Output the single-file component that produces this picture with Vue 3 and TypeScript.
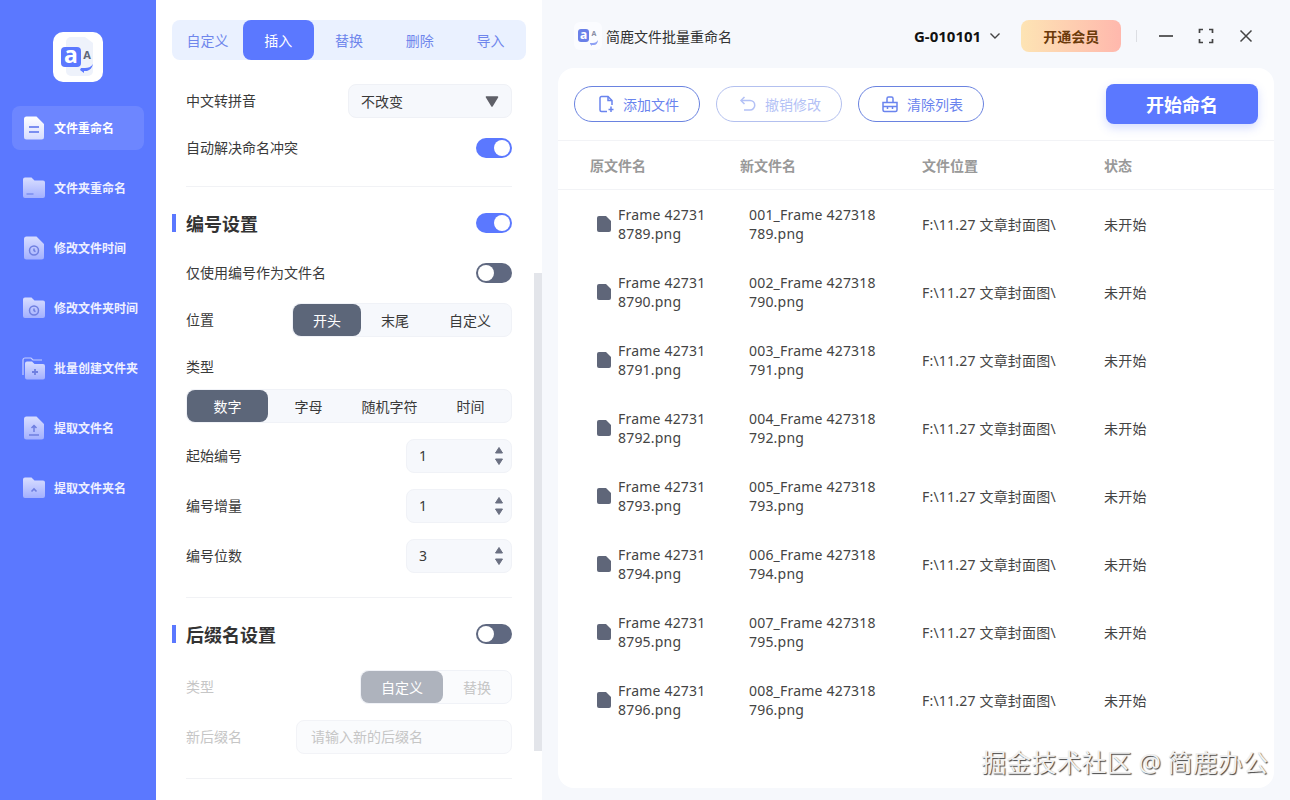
<script setup lang="ts">
const navItems = [
  { label: '文件重命名', shape: 'file', mark: 'lines' },
  { label: '文件夹重命名', shape: 'folder', mark: 'dash' },
  { label: '修改文件时间', shape: 'file', mark: 'clock' },
  { label: '修改文件夹时间', shape: 'folder', mark: 'clock' },
  { label: '批量创建文件夹', shape: 'stack', mark: 'plus' },
  { label: '提取文件名', shape: 'file', mark: 'upload' },
  { label: '提取文件夹名', shape: 'folder', mark: 'caret' },
]
const tabs = ['自定义', '插入', '替换', '删除', '导入']
const numberInputs = [
  { label: '起始编号', value: 1 },
  { label: '编号增量', value: 1 },
  { label: '编号位数', value: 3 },
]
const files = [789, 790, 791, 792, 793, 794, 795, 796].map((n, i) => ({
  oldName: `Frame 427318${n}.png`,
  newName: `00${i + 1}_Frame 427318${n}.png`,
}))
</script>

<template>
  <div class="app">
    <aside class="sidebar">
      <div class="logo">
        <svg width="50" height="50" viewBox="0 0 50 50">
          <path d="M13 10a5 5 0 0 1 5-5h14l8 6v28a5 5 0 0 1-5 5H18a5 5 0 0 1-5-5z" fill="#eef2fb" />
          <rect x="8" y="15" width="20" height="20" rx="4" fill="#5b78ff" />
          <text x="18" y="31" class="logo-a">a</text>
          <text x="34" y="27" class="logo-b">A</text>
          <path d="M28 36h4c3 0 6-1 8-4-1 4-3 6-6 7h-3v2l-4-3 1-2z" fill="#5b78ff" />
        </svg>
      </div>
      <nav class="nav">
        <div v-for="(item, i) in navItems" :key="item.label" class="nav-item" :class="{ active: i === 0 }">
          <svg width="24" height="24" viewBox="0 0 24 24">
            <defs>
              <linearGradient :id="`nav${i}`" x1="0" y1="0" x2="0" y2="1">
                <stop offset="0" :stop-color="i === 0 ? '#ffffff' : '#d9deff'" />
                <stop offset="1" :stop-color="i === 0 ? '#d6dcff' : '#a3b0ff'" />
              </linearGradient>
            </defs>
            <path v-if="item.shape === 'file'" d="M5 .5h9.5L22 8v13a2.5 2.5 0 0 1-2.5 2.5h-15A2.5 2.5 0 0 1 2 21V3A2.5 2.5 0 0 1 4.500 .5z" :fill="`url(#nav${i})`" />
            <path v-if="item.shape === 'folder'" d="M1 3.500A2 2 0 0 1 3 1.500h6.500l3 3h8.500a2 2 0 0 1 2 2V20a2 2 0 0 1-2 2H3a2 2 0 0 1-2-2z" :fill="`url(#nav${i})`" />
            <template v-if="item.shape === 'stack'">
              <path d="M1 19V4a2 2 0 0 1 2-2h6l2 2h9" fill="none" stroke="#c5cdff" stroke-width="1.200" />
              <path d="M3 7.500a2 2 0 0 1 2-2h5l2.500 2.500H21a2 2 0 0 1 2 2V21.500a2 2 0 0 1-2 2H5a2 2 0 0 1-2-2z" :fill="`url(#nav${i})`" />
            </template>
            <g v-if="item.mark === 'lines'" fill="none" stroke="#7b8ef0" stroke-width="1.800">
              <path d="M7 11h10M7 16h10" />
            </g>
            <path v-if="item.mark === 'dash'" d="M4.500 18h7" stroke="#7b8ef0" stroke-width="1.500" fill="none" />
            <g v-if="item.mark === 'clock'" fill="none" stroke="#6f7fe0" stroke-width="1.500">
              <circle cx="12" cy="14.500" r="4.500" />
              <path d="M12 12.500v2.200l1.500 1" />
            </g>
            <path v-if="item.mark === 'plus'" d="M13 13v6M10 16h6" stroke="#6f7fe0" stroke-width="1.800" fill="none" />
            <path v-if="item.mark === 'upload'" d="M12 16v-6M9.500 12 12 9.500l2.500 2.500M7 19h10" stroke="#6f7fe0" stroke-width="1.500" fill="none" />
            <path v-if="item.mark === 'caret'" d="M9.500 15.500 12 13l2.500 2.500" stroke="#6f7fe0" stroke-width="1.600" fill="none" />
          </svg>
          <span>{{ item.label }}</span>
        </div>
      </nav>
    </aside>

    <section class="panel">
      <div class="tabs">
        <div v-for="(tab, i) in tabs" :key="tab" class="tab" :class="{ active: i === 1 }">{{ tab }}</div>
      </div>

      <div class="form">
        <div class="row mt-24">
          <span>中文转拼音</span>
          <div class="select">
            <span>不改变</span>
            <svg width="14" height="11" viewBox="0 0 14 11"><path d="M1.500 1h11L7 10z" fill="#5f6068" stroke="#5f6068" stroke-width="1.500" stroke-linejoin="round" /></svg>
          </div>
        </div>
        <div class="row mt-20">
          <span>自动解决命名冲突</span>
          <div class="switch on"><i></i></div>
        </div>
        <div class="divider mt-28"></div>

        <div class="row heading mt-26">
          <h2>编号设置</h2>
          <div class="switch on"><i></i></div>
        </div>
        <div class="row mt-30">
          <span>仅使用编号作为文件名</span>
          <div class="switch"><i></i></div>
        </div>
        <div class="row mt-20">
          <span>位置</span>
          <div class="seg seg-position">
            <div class="seg-item active">开头</div>
            <div class="seg-item">末尾</div>
            <div class="seg-item">自定义</div>
          </div>
        </div>
        <div class="row mt-20"><span>类型</span></div>
        <div class="seg seg-type mt-12">
          <div class="seg-item active">数字</div>
          <div class="seg-item">字母</div>
          <div class="seg-item">随机字符</div>
          <div class="seg-item">时间</div>
        </div>
        <div v-for="input in numberInputs" :key="input.label" class="row mt-16">
          <span>{{ input.label }}</span>
          <div class="number">
            <span>{{ input.value }}</span>
            <div class="spin">
              <svg width="10" height="8" viewBox="0 0 10 8"><path d="M1.500 7 5 1.500 8.500 7z" fill="#6b7082" stroke="#6b7082" stroke-linejoin="round" /></svg>
              <svg width="10" height="8" viewBox="0 0 10 8"><path d="M1.500 1 5 6.500 8.500 1z" fill="#6b7082" stroke="#6b7082" stroke-linejoin="round" /></svg>
            </div>
          </div>
        </div>
        <div class="divider mt-24"></div>

        <div class="row heading mt-26">
          <h2>后缀名设置</h2>
          <div class="switch"><i></i></div>
        </div>
        <div class="row mt-26 muted">
          <span>类型</span>
          <div class="seg seg-suffix">
            <div class="seg-item active">自定义</div>
            <div class="seg-item">替换</div>
          </div>
        </div>
        <div class="row mt-16 muted">
          <span>新后缀名</span>
          <div class="text-input">请输入新的后缀名</div>
        </div>
        <div class="divider mt-24"></div>
      </div>
      <div class="scrollbar"></div>
    </section>

    <main class="main">
      <header class="titlebar">
        <div class="mini-logo">
          <svg width="24" height="24" viewBox="0 0 24 24">
            <rect x="2" y="5" width="11" height="13" rx="3" fill="#6a80e8" />
            <text x="7.500" y="15" class="mini-a">a</text>
            <text x="18" y="12" class="mini-b">A</text>
            <path d="M14 19h3c2 0 4-1 5-3 0 3-2 5-4 5h-2v1l-2-2z" fill="#8fa2f5" />
          </svg>
        </div>
        <span class="app-name">简鹿文件批量重命名</span>
        <span class="account">G-010101</span>
        <svg class="chevron" width="12" height="8" viewBox="0 0 12 8"><path d="M1.500 1.500 6 6l4.500-4.500" fill="none" stroke="#444" stroke-width="1.400" /></svg>
        <div class="vip">开通会员</div>
        <div class="separator"></div>
        <svg class="win" width="16" height="16" viewBox="0 0 16 16"><path d="M1 8h14" stroke="#444" stroke-width="1.700" /></svg>
        <svg class="win" width="16" height="16" viewBox="0 0 16 16"><path d="M1.500 5V1.500H5M11 1.500h3.500V5M14.500 11v3.500H11M5 14.500H1.500V11" fill="none" stroke="#444" stroke-width="1.700" /></svg>
        <svg class="win" width="16" height="16" viewBox="0 0 16 16"><path d="m2.500 2.500 11 11M13.500 2.500l-11 11" stroke="#444" stroke-width="1.500" /></svg>
      </header>

      <div class="card">
        <div class="toolbar">
          <button class="btn">
            <svg width="18" height="18" viewBox="0 0 18 18" fill="none" stroke="#6a84ee" stroke-width="1.500">
              <path d="M10 16.500H4.500A1.500 1.500 0 0 1 3 15V3a1.500 1.500 0 0 1 1.500-1.500h6.500L15 5.500V10" />
              <path d="M11 1.500v4h4M14 11.500v5.500M11.500 14.500h5" />
            </svg>
            添加文件
          </button>
          <button class="btn disabled">
            <svg width="18" height="18" viewBox="0 0 18 18" fill="none" stroke="#6a84ee" stroke-width="1.500">
              <path d="M5.500 2 2 5.500 5.500 9" />
              <path d="M2.500 5.500H11a4.500 4.500 0 0 1 0 9.500H5" />
            </svg>
            撤销修改
          </button>
          <button class="btn">
            <svg width="18" height="18" viewBox="0 0 18 18" fill="none" stroke="#6a84ee" stroke-width="1.500">
              <path d="M2 7.500h14V15a1.500 1.500 0 0 1-1.500 1.500h-11A1.500 1.500 0 0 1 2 15zM1.500 7.500h15M6 7.500V3.500A1.500 1.500 0 0 1 7.500 2h3A1.500 1.500 0 0 1 12 3.500v4M2 11.500h14M6.500 11.500V14M11.500 11.500V14" />
            </svg>
            清除列表
          </button>
          <button class="start">开始命名</button>
        </div>

        <div class="table-head">
          <span>原文件名</span>
          <span>新文件名</span>
          <span>文件位置</span>
          <span>状态</span>
        </div>
        <div class="table-body">
          <div v-for="file in files" :key="file.newName" class="table-row">
            <div class="name-cell">
              <svg width="14" height="16" viewBox="0 0 14 16"><path d="M2 0h7l5 5v9a2 2 0 0 1-2 2H2a2 2 0 0 1-2-2V2a2 2 0 0 1 2-2z" fill="#5f6679" /></svg>
              <span class="old-name">{{ file.oldName }}</span>
            </div>
            <div class="new-name">{{ file.newName }}</div>
            <div>F:\11.27 文章封面图\</div>
            <div>未开始</div>
          </div>
        </div>
      </div>
    </main>

    <div class="watermark">掘金技术社区 @ 简鹿办公</div>
  </div>
</template>

<style>
body {
  background: #f6f8fc;
  overflow: hidden;
}
</style>

<style scoped>
.app {
  position: relative;
  display: flex;
  width: 1290px;
  height: 800px;
  overflow: hidden;
  font-family: "Noto Sans", "Noto Sans CJK SC", sans-serif;
  font-size: 14px;
  color: #3a3a3a;
}

.sidebar {
  flex: 0 0 156px;
  background: #5b78ff;
}

.logo {
  width: 50px;
  height: 50px;
  margin: 32px 0 0 53px;
  background: #fff;
  border-radius: 10px;
}

.logo-a {
  font: 700 23px "Noto Sans", sans-serif;
  fill: #fff;
  text-anchor: middle;
}

.logo-b {
  font: 700 11px "Noto Sans", sans-serif;
  fill: #5f6679;
  text-anchor: middle;
}

.nav {
  display: flex;
  flex-direction: column;
  gap: 16px;
  margin: 24px 12px 0;
}

.nav-item {
  display: flex;
  align-items: center;
  gap: 8px;
  height: 44px;
  padding-left: 10px;
  border-radius: 8px;
  font-size: 12px;
  font-weight: 700;
  color: #eef0ff;
  white-space: nowrap;
}

.nav-item.active {
  background: rgba(255, 255, 255, 0.11);
  color: #fff;
}

.panel {
  position: relative;
  flex: 0 0 386px;
  background: #fff;
  padding-top: 20px;
}

.tabs {
  display: flex;
  height: 40px;
  margin: 0 16px;
  background: #eaf1ff;
  border-radius: 8px;
}

.tab {
  flex: 1;
  display: flex;
  align-items: center;
  justify-content: center;
  color: #6f86ec;
  border-radius: 8px;
}

.tab.active {
  background: #5b78ff;
  color: #fff;
}

.form {
  padding: 0 30px;
}

.row {
  display: flex;
  align-items: center;
  justify-content: space-between;
  min-height: 20px;
}

.row > span {
  line-height: 19px;
  padding-bottom: 1px;
}

.number > span,
.text-input {
  padding-bottom: 2px;
}

.mt-12 { margin-top: 12px; }
.mt-16 { margin-top: 16px; }
.mt-20 { margin-top: 20px; }
.mt-24 { margin-top: 24px; }
.mt-26 { margin-top: 26px; }
.mt-28 { margin-top: 28px; }
.mt-30 { margin-top: 30px; }

.select {
  display: flex;
  align-items: center;
  justify-content: space-between;
  box-sizing: border-box;
  width: 164px;
  height: 34px;
  padding: 0 12px;
  background: #f6f8fc;
  border: 1px solid #eff1f6;
  border-radius: 8px;
}

.switch {
  display: flex;
  width: 36px;
  height: 20px;
  padding: 2px;
  box-sizing: border-box;
  background: #5f6880;
  border-radius: 10px;
}

.switch i {
  width: 16px;
  height: 16px;
  background: #fff;
  border-radius: 50%;
}

.switch.on {
  justify-content: flex-end;
  background: #5b78ff;
}

.divider {
  height: 1px;
  background: #f1f2f5;
}

.heading {
  position: relative;
}

.heading::before {
  content: "";
  position: absolute;
  left: -14px;
  top: 1px;
  width: 4px;
  height: 18px;
  background: #5b78ff;
}

h2 {
  margin: 0 0 -1px;
  padding-top: 1px;
  font-size: 18px;
  line-height: 20px;
  font-weight: 700;
  color: #333;
}

.seg {
  display: grid;
  box-sizing: border-box;
  height: 34px;
  background: #f6f8fc;
  border: 1px solid #f0f2f7;
  border-radius: 8px;
}

.seg-position {
  width: 220px;
  grid-template-columns: 68px 68px 1fr;
}

.seg-type {
  grid-template-columns: repeat(4, 1fr);
}

.seg-suffix {
  width: 152px;
  grid-template-columns: 82px 1fr;
}

.seg-item {
  display: flex;
  align-items: center;
  justify-content: center;
  border-radius: 8px;
}

.seg-item.active {
  background: #5c6679;
  color: #fff;
}

.number {
  display: flex;
  align-items: center;
  justify-content: space-between;
  box-sizing: border-box;
  width: 106px;
  height: 34px;
  padding: 0 7px 0 12px;
  background: #f6f8fc;
  border: 1px solid #f0f2f7;
  border-radius: 8px;
}

.spin {
  display: flex;
  flex-direction: column;
  gap: 4px;
}

.spin svg {
  display: block;
}

.muted {
  color: #c6c6c6;
}

.muted .seg {
  background: #fafbfd;
}

.muted .seg-item.active {
  background: #aeb3bd;
}

.text-input {
  display: flex;
  align-items: center;
  box-sizing: border-box;
  width: 216px;
  height: 34px;
  padding-left: 14px;
  background: #fafbfd;
  border: 1px solid #f2f3f7;
  border-radius: 8px;
}

.scrollbar {
  position: absolute;
  top: 273px;
  right: 0;
  width: 8px;
  height: 478px;
  background: #e3e5ea;
}

.main {
  flex: 1;
  display: flex;
  flex-direction: column;
  min-width: 0;
  background: #f6f8fc;
}

.titlebar {
  display: flex;
  align-items: center;
  height: 72px;
  margin-bottom: -4px;
  padding-left: 32px;
}

.mini-logo {
  display: flex;
  align-items: center;
  justify-content: center;
  width: 28px;
  height: 28px;
  background: #fbfcff;
  border-radius: 6px;
}

.mini-a {
  font: 700 12px "Noto Sans", sans-serif;
  fill: #fff;
  text-anchor: middle;
}

.mini-b {
  font: 700 7px "Noto Sans", sans-serif;
  fill: #8a90a5;
  text-anchor: middle;
}

.app-name {
  margin-left: 4px;
  color: #333;
}

.account {
  margin-left: 182px;
  font-size: 15px;
  font-weight: 700;
  color: #111;
}

.chevron {
  margin-left: 8px;
}

.vip {
  display: flex;
  align-items: center;
  justify-content: center;
  width: 100px;
  height: 32px;
  margin-left: 20px;
  background: linear-gradient(90deg, #fde4b4, #ffb8ad);
  border-radius: 8px;
  font-weight: 700;
  color: #6b3a0a;
}

.separator {
  width: 1px;
  height: 12px;
  margin: 0 21px 0 15px;
  background: #dcdee3;
}

.win + .win {
  margin-left: 24px;
}

.card {
  flex: 1;
  display: flex;
  flex-direction: column;
  margin: 0 16px 12px;
  background: #fff;
  border-radius: 16px;
}

.toolbar {
  display: flex;
  align-items: center;
  gap: 16px;
  height: 72px;
  padding: 0 16px;
  border-bottom: 1px solid #f2f3f6;
  box-sizing: content-box;
}

.btn {
  display: flex;
  align-items: center;
  justify-content: center;
  gap: 8px;
  box-sizing: border-box;
  width: 126px;
  height: 36px;
  padding: 0 0 0 2px;
  background: #fff;
  border: 1px solid #6a83e0;
  border-radius: 18px;
  font: inherit;
  color: #6a84ee;
}

.btn.disabled {
  opacity: 0.5;
}

.start {
  width: 152px;
  height: 40px;
  margin-left: auto;
  background: #5b78ff;
  border: 0;
  border-radius: 8px;
  box-shadow: 0 4px 10px rgba(91, 120, 255, 0.25);
  font: inherit;
  font-size: 18px;
  font-weight: 700;
  color: #fff;
}

.table-head,
.table-row {
  display: grid;
  grid-template-columns: 150px 182px 182px 1fr;
  padding-left: 32px;
  align-items: center;
}

.table-head {
  height: 48px;
  border-bottom: 1px solid #f2f3f6;
  font-weight: 700;
  color: #999;
}

.table-body {
  padding-top: 1px;
}

.table-row {
  box-sizing: border-box;
  height: 68px;
  padding-bottom: 2px;
  line-height: 19px;
  letter-spacing: 0.2px;
  color: #444;
}

.name-cell {
  display: flex;
  align-items: center;
  gap: 7px;
  padding-left: 7px;
}

.name-cell svg {
  flex: none;
}

.old-name {
  width: 90px;
  word-break: break-all;
}

.new-name {
  width: 132px;
  margin-left: 9px;
  word-break: break-all;
}

.watermark {
  position: absolute;
  right: 22px;
  top: 744px;
  font-size: 25px;
  line-height: 36px;
  letter-spacing: 0.1px;
  white-space: nowrap;
  color: #f0f0f0;
  text-shadow: 1px 1px 1px #444;
}
</style>
